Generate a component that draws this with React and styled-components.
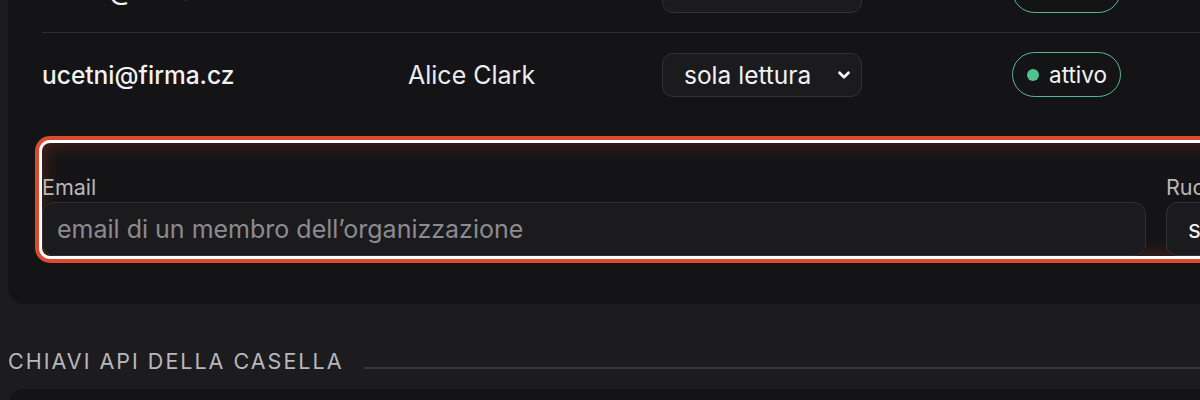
import React from "react";
import styled, { createGlobalStyle } from "styled-components";
import { ChevronDown } from "lucide-react";

const GlobalStyle = createGlobalStyle`
  html, body {
    margin: 0;
    background: #1c1c1f;
    overflow: hidden;
  }
  body {
    font-family: Inter, "Noto Sans", sans-serif;
    color: #ececef;
  }
`;

const members = [
  { email: "office@firma.cz", name: "Bob Novak", role: "amministratore", status: "attivo" },
  { email: "ucetni@firma.cz", name: "Alice Clark", role: "sola lettura", status: "attivo" },
];

function App() {
  return (
    <>
      <GlobalStyle />
      <Page>
        <Card>
          {members.map((m) => (
            <Row key={m.email}>
              <Email>{m.email}</Email>
              <Name>{m.name}</Name>
              <div>
                <Select>
                  <span>{m.role}</span>
                  <ChevronDown size={18} strokeWidth={3.6} />
                </Select>
              </div>
              <div>
                <Badge>
                  <Dot />
                  {m.status}
                </Badge>
              </div>
            </Row>
          ))}
          <InviteForm>
            <Field>
              <Label>Email</Label>
              <Input placeholder="email di un membro dell’organizzazione" />
            </Field>
            <Field>
              <Label>Ruolo</Label>
              <Select $wide>
                <span>sola lettura</span>
                <ChevronDown size={18} strokeWidth={3.6} />
              </Select>
            </Field>
            <Field>
              <Label>&nbsp;</Label>
              <Button>Invita</Button>
            </Field>
          </InviteForm>
        </Card>
        <SectionTitle>
          <span>Chiavi API della casella</span>
          <Rule />
        </SectionTitle>
        <Card $next />
      </Page>
    </>
  );
}

const Page = styled.main`
  margin-top: -51px;
  padding-left: 8px;
  width: 1700px;
`;

const Card = styled.section`
  width: 1600px;
  box-sizing: border-box;
  background: #141416;
  border-radius: 16px;
  padding: ${(p) => (p.$next ? "0" : "0 34px 48px")};
  height: ${(p) => (p.$next ? "120px" : "auto")};
`;

const Row = styled.div`
  display: grid;
  grid-template-columns: 366px 254px 350px 1fr;
  align-items: center;
  padding: 19px 0;
  border-bottom: 1px solid #2c2c31;
  font-size: 25px;

  &:last-of-type {
    border-bottom: none;
  }
`;

const Email = styled.div`
  font-size: 24.5px;
  font-weight: 500;
  color: #f2f2f4;
`;

const Name = styled.div`
  color: #ececef;
`;

const Select = styled.div`
  box-sizing: border-box;
  display: flex;
  align-items: center;
  justify-content: space-between;
  width: ${(p) => (p.$wide ? "220px" : "200px")};
  height: ${(p) => (p.$wide ? "54px" : "44px")};
  padding: 0 8px 0 21px;
  border: 1px solid #313136;
  border-radius: 11px;
  background: #1b1b1e;
  color: #f2f2f4;
  font-size: 24.5px;

  svg {
    color: #f4f4f6;
  }
`;

const Badge = styled.span`
  display: inline-flex;
  align-items: center;
  gap: 10px;
  height: 45px;
  box-sizing: border-box;
  padding: 0 13px 0 14px;
  border: 1.5px solid #55b98f;
  border-radius: 999px;
  font-size: 22.5px;
  color: #f2f2f4;
`;

const Dot = styled.span`
  width: 12px;
  height: 12px;
  border-radius: 50%;
  background: #4fc28f;
`;

const InviteForm = styled.form`
  display: grid;
  grid-template-columns: minmax(0, 1fr) 220px 168px;
  gap: 20px;
  margin-top: 27px;
  padding-top: 31px;
  border-radius: 8px;
  box-shadow: 0 0 0 3px #ffffff, 0 0 0 7px #dc4a2f,
    inset 0 0 20px rgba(220, 74, 47, 0.32);
`;

const Field = styled.div`
  display: flex;
  flex-direction: column;
`;

const Label = styled.label`
  font-size: 21.5px;
  line-height: 26px;
  color: #bbb6b6;
  margin-bottom: 2px;
`;

const Input = styled.input`
  box-sizing: border-box;
  height: 54px;
  padding: 0 14px;
  border: 1px solid #2f2f34;
  border-radius: 12px;
  background: #1b1b1e;
  color: #f2f2f4;
  font-family: inherit;
  font-size: 25px;
  outline: none;

  &::placeholder {
    color: #8b8b90;
  }
`;

const Button = styled.button`
  height: 54px;
  border: none;
  border-radius: 12px;
  background: #3b82f6;
  color: #fff;
  font-family: inherit;
  font-size: 22px;
`;

const SectionTitle = styled.h2`
  display: flex;
  align-items: center;
  gap: 21px;
  margin: 44px 0 15px;
  font-size: 21.5px;
  line-height: 26px;
  font-weight: 400;
  letter-spacing: 2px;
  text-transform: uppercase;
  color: #b7b7bd;

  span {
    white-space: nowrap;
  }
`;

const Rule = styled.div`
  flex: 1;
  height: 2px;
  margin-top: 14px;
  background: #36363b;
`;

export default App;
